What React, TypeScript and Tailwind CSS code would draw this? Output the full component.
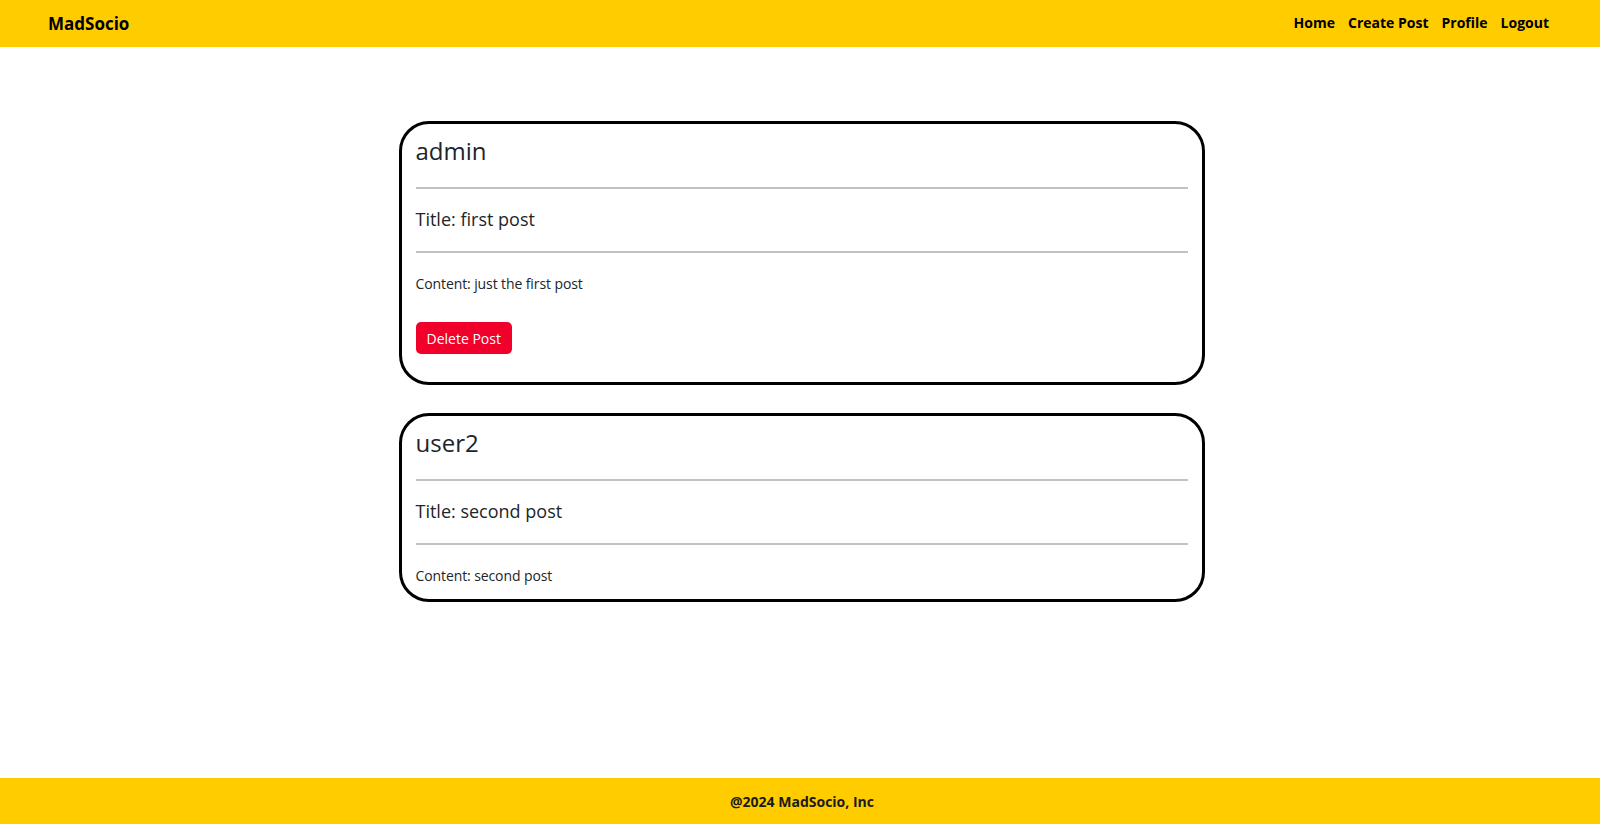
import React from "react";

const font = { fontFamily: '"Open Sans", "Noto Sans", sans-serif' };

function Hr({ className = "" }: { className?: string }) {
  return <div className={"h-[2px] bg-[#c2c2c2] " + className} />;
}

function Card({
  user,
  title,
  content,
  showDelete,
}: {
  user: string;
  title: string;
  content: string;
  showDelete?: boolean;
}) {
  return (
    <div className="w-[806px] border-[3px] border-black rounded-[30px] px-[14px] pt-[12px] pb-[13px] bg-white text-[#212529]">
      <div className="text-[24px] leading-[29px]">{user}</div>
      <Hr className="mt-[22px]" />
      <div className="mt-[19px] text-[18px] leading-[22px]">{title}</div>
      <Hr className="mt-[21px]" />
      <div className="mt-[20px] text-[14px] leading-[21px] tracking-[-0.1px]">{content}</div>
      {showDelete && (
        <div className="mt-[28px] mb-[15px]">
          <button className="h-[32px] px-[11px] rounded-[5px] bg-[#f0002b] text-white text-[14px] leading-[21px]">
            Delete Post
          </button>
        </div>
      )}
    </div>
  );
}

export default function App() {
  return (
    <div style={font} className="min-h-screen flex flex-col bg-white">
      <header className="h-[47px] bg-[#ffcc00] flex items-center justify-between pl-[48px] pr-[51px] shrink-0">
        <div className="text-[17px] font-bold text-black leading-none">MadSocio</div>
        <nav className="flex items-center gap-[13px] text-[14px] font-bold text-black leading-none -mt-px">
          <a>Home</a>
          <a>Create Post</a>
          <a>Profile</a>
          <a>Logout</a>
        </nav>
      </header>
      <main className="flex-1 flex flex-col items-center gap-[28px] pt-[74px] pl-[3px]">
        <Card
          user="admin"
          title="Title: first post"
          content="Content: just the first post"
          showDelete
        />
        <Card user="user2" title="Title: second post" content="Content: second post" />
      </main>
      <footer className="h-[46px] bg-[#ffcc00] flex items-center justify-center pl-[4px] shrink-0">
        <span className="text-[14px] font-bold text-[#1a1a1a]">@2024 MadSocio, Inc</span>
      </footer>
    </div>
  );
}
